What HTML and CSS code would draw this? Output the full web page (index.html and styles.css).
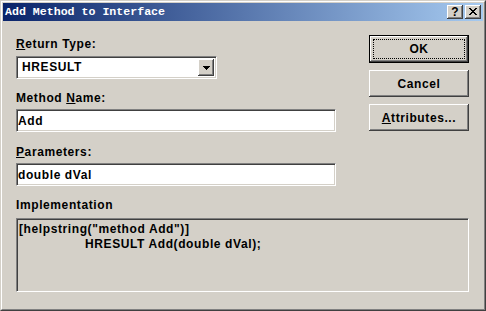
FILE: index.html
```html
<!DOCTYPE html>
<html>
<head>
<meta charset="utf-8">
<link rel="stylesheet" href="styles.css">
</head>
<body>
<div class="window">
  <div class="frame">
    <div class="titlebar">
      <span class="title">Add Method to Interface</span>
      <div class="caption-buttons">
        <div class="cap-btn help">?</div>
        <div class="cap-btn close">
          <svg width="8" height="7" viewBox="0 0 8 7"><path d="M0 0h2v1h-2zM6 0h2v1h-2zM1 1h2v1h-2zM5 1h2v1h-2zM2 2h4v1h-4zM3 3h2v1h-2zM2 4h4v1h-4zM1 5h2v1h-2zM5 5h2v1h-2zM0 6h2v1h-2zM6 6h2v1h-2z" fill="#000"/></svg>
        </div>
      </div>
    </div>
    <div class="client">
      <div class="top-row">
        <div class="fields">
          <div class="label first"><u>R</u>eturn Type:</div>
          <div class="combo">
            <span class="combo-text">HRESULT</span>
            <div class="combo-btn">
              <svg width="7" height="4" viewBox="0 0 7 4"><path d="M0 0h7v1h-7zM1 1h5v1h-5zM2 2h3v1h-3zM3 3h1v1h-1z" fill="#000"/></svg>
            </div>
          </div>
          <div class="label">Method <u>N</u>ame:</div>
          <div class="input">Add</div>
          <div class="label label-params"><u>P</u>arameters:</div>
          <div class="input">double dVal</div>
        </div>
        <div class="buttons">
          <div class="btn default"><span class="focus">OK</span></div>
          <div class="btn cancel">Cancel</div>
          <div class="btn attrs"><u>A</u>ttributes...</div>
        </div>
      </div>
      <div class="label impl-label">Implementation</div>
      <div class="impl">
        <div class="impl-line">[helpstring("method Add")]</div>
        <div class="impl-line indent">HRESULT Add(double dVal);</div>
      </div>
    </div>
  </div>
</div>
</body>
</html>
```

FILE: styles.css
```css
* { box-sizing: border-box; }
html, body { margin: 0; padding: 0; background: #d4d0c8; }
body {
  font-family: "Liberation Sans", Arial, sans-serif;
  font-size: 12px;
  font-weight: bold;
  letter-spacing: 0.6px;
  color: #000;
}
.window {
  width: 486px;
  height: 311px;
  border: 1px solid;
  border-color: #d4d0c8 #404040 #404040 #d4d0c8;
  background: #d4d0c8;
}
.frame {
  height: 100%;
  border: 1px solid;
  border-color: #fff #808080 #808080 #fff;
  padding: 1px;
}
.titlebar {
  height: 18px;
  background: linear-gradient(to right, #0a246a, #a6caf0);
  display: flex;
  align-items: center;
  padding: 0 2px 0 2px;
}
.title {
  font-family: "Liberation Mono", "DejaVu Sans Mono", monospace;
  font-size: 11.6px;
  font-weight: bold;
  letter-spacing: 0;
  color: #fff;
  line-height: 14px;
  flex: 1;
  white-space: pre;
}
.caption-buttons {
  display: flex;
  gap: 2px;
}
.cap-btn {
  width: 16px;
  height: 14px;
  background: #d4d0c8;
  box-shadow: inset -1px -1px #404040, inset 1px 1px #fff, inset -2px -2px #808080;
  display: flex;
  align-items: center;
  justify-content: center;
  font-family: "Liberation Sans", Arial, sans-serif;
  font-size: 12px;
  font-weight: bold;
  letter-spacing: 0;
  line-height: 12px;
}
.help { padding-bottom: 1px; }
.close svg { display: block; margin-top: -1px; }
.client {
  padding-left: 13px;
}
.top-row {
  display: flex;
  align-items: flex-start;
}
.fields {
  width: 320px;
  display: flex;
  flex-direction: column;
}
.label {
  line-height: 14px;
  height: 14px;
  white-space: nowrap;
  margin-top: 12px;
}
.label.first { margin-top: 16px; }
.label-params { margin-top: 13px; }
u { text-decoration: underline; text-underline-offset: 1px; }
.combo {
  margin-top: 5px;
  width: 201px;
  height: 23px;
  background: #fff;
  border: 1px solid;
  border-color: #808080 #fff #fff #808080;
  box-shadow: inset 1px 1px #404040, inset -1px -1px #d4d0c8;
  display: flex;
  align-items: stretch;
  padding: 2px 2px 2px 2px;
}
.combo-text {
  flex: 1;
  line-height: 17px;
  padding-left: 3px;
}
.combo-btn {
  width: 16px;
  background: #d4d0c8;
  box-shadow: inset -1px -1px #404040, inset 1px 1px #fff, inset -2px -2px #808080;
  display: flex;
  align-items: center;
  justify-content: center;
}
.combo-btn svg { display: block; }
.input {
  margin-top: 4px;
  width: 320px;
  height: 23px;
  background: #fff;
  border: 1px solid;
  border-color: #808080 #fff #fff #808080;
  box-shadow: inset 1px 1px #404040, inset -1px -1px #d4d0c8;
  padding: 1px 2px 0 1px;
  line-height: 20px;
  white-space: nowrap;
}
.buttons {
  margin-left: 33px;
  margin-top: 14px;
  display: flex;
  flex-direction: column;
}
.btn {
  width: 100px;
  height: 27px;
  background: #d4d0c8;
  box-shadow: inset -1px -1px #404040, inset 1px 1px #fff, inset -2px -2px #808080;
  display: flex;
  align-items: center;
  justify-content: center;
  line-height: 14px;
}
.btn.default {
  border: 1px solid #000;
  height: 28px;
}
.focus {
  position: relative;
  display: flex;
  align-items: center;
  justify-content: center;
  width: 90px;
  height: 18px;
  outline: 1px dotted #000;
}
.cancel { margin-top: 7px; }
.attrs { margin-top: 7px; }
.impl-label { margin-top: 12px; }
.impl {
  margin-top: 6px;
  width: 453px;
  height: 74px;
  border: 1px solid;
  border-color: #808080 #fff #fff #808080;
  box-shadow: inset 1px 1px #404040, inset -1px -1px #d4d0c8;
  padding: 3px 2px 0 2px;
  background: #d4d0c8;
}
.impl-line {
  line-height: 15px;
  white-space: pre;
}
.indent { padding-left: 66px; }
```
